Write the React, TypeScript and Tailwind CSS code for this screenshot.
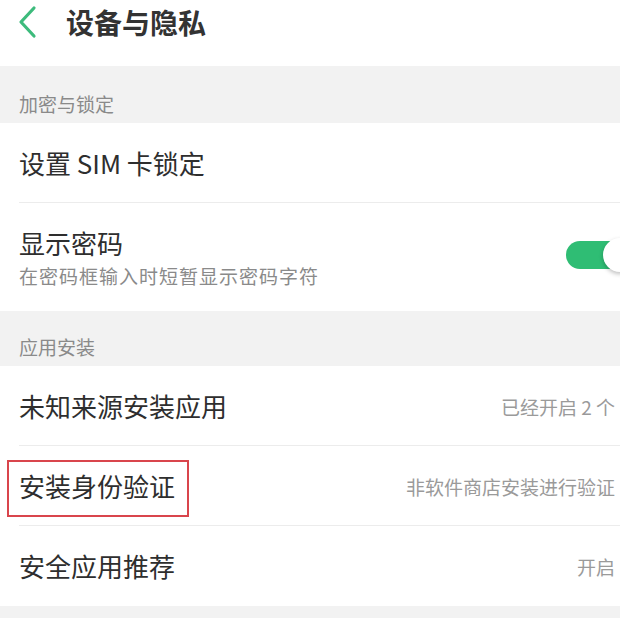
import React from "react";

const font = { fontFamily: '"Noto Sans CJK SC", "Noto Sans", sans-serif' };

const SectionHeader = ({ title, h }: { title: string; h: string }) => (
	<div className={`flex items-end bg-[#f2f2f2] pl-[19px] pb-[10px] ${h}`}>
		<span className="text-[19px] leading-none text-[#8a8a8a]">{title}</span>
	</div>
);

const Row = ({
	title,
	value,
	divider,
	boxed,
}: {
	title: string;
	value?: string;
	divider?: boolean;
	boxed?: boolean;
}) => (
	<div className="relative flex h-[80px] items-center justify-between bg-white pl-[19px] pr-[5px]">
		<span className="text-[26px] leading-none text-[#2e2e2e]">{title}</span>
		{value && <span className="text-[19px] leading-none text-[#9a9a9a]">{value}</span>}
		{boxed && (
			<div className="absolute left-[7px] top-[14px] h-[57px] w-[182px] border-2 border-[#d9454c]" />
		)}
		{divider && <div className="absolute bottom-0 left-[19px] right-0 h-px bg-[#ececec]" />}
	</div>
);

export default function App() {
	return (
		<div className="h-[618px] w-[620px] overflow-hidden bg-[#f2f2f2]" style={font}>
			<header className="flex h-[66px] items-center bg-white pb-[22px]">
				<svg className="ml-[16px] h-[34px] w-[22px]" viewBox="0 0 22 34" fill="none">
					<path d="M18 3 L5 17 L18 31" stroke="#3dbb7c" strokeWidth="3.2" strokeLinecap="round" strokeLinejoin="round" />
				</svg>
				<h1 className="ml-[28px] text-[28px] font-bold leading-none text-[#333333]">设备与隐私</h1>
			</header>

			<SectionHeader title="加密与锁定" h="h-[57px]" />
			<Row title="设置 SIM 卡锁定" divider />
			<div className="flex h-[108px] items-center justify-between bg-white pl-[19px]">
				<div className="flex flex-col">
					<span className="text-[26px] leading-none text-[#2e2e2e]">显示密码</span>
					<span className="mt-[10px] text-[19px] leading-none tracking-[1px] text-[#8a8a8a]">
						在密码框输入时短暂显示密码字符
					</span>
				</div>
				<div className="relative mt-[-4px] h-[28px] w-[57px] shrink-0 translate-x-[3px]">
					<div className="h-[28px] w-[57px] rounded-full bg-[#2fbd74]" />
					<div className="absolute left-[37px] top-[-3px] h-[34px] w-[34px] rounded-full bg-white shadow-[0_2px_4px_rgba(0,0,0,0.25)]" />
				</div>
			</div>

			<SectionHeader title="应用安装" h="h-[55px]" />
			<Row title="未知来源安装应用" value="已经开启 2 个" divider />
			<Row title="安装身份验证" value="非软件商店安装进行验证" divider boxed />
			<Row title="安全应用推荐" value="开启" />
		</div>
	);
}
